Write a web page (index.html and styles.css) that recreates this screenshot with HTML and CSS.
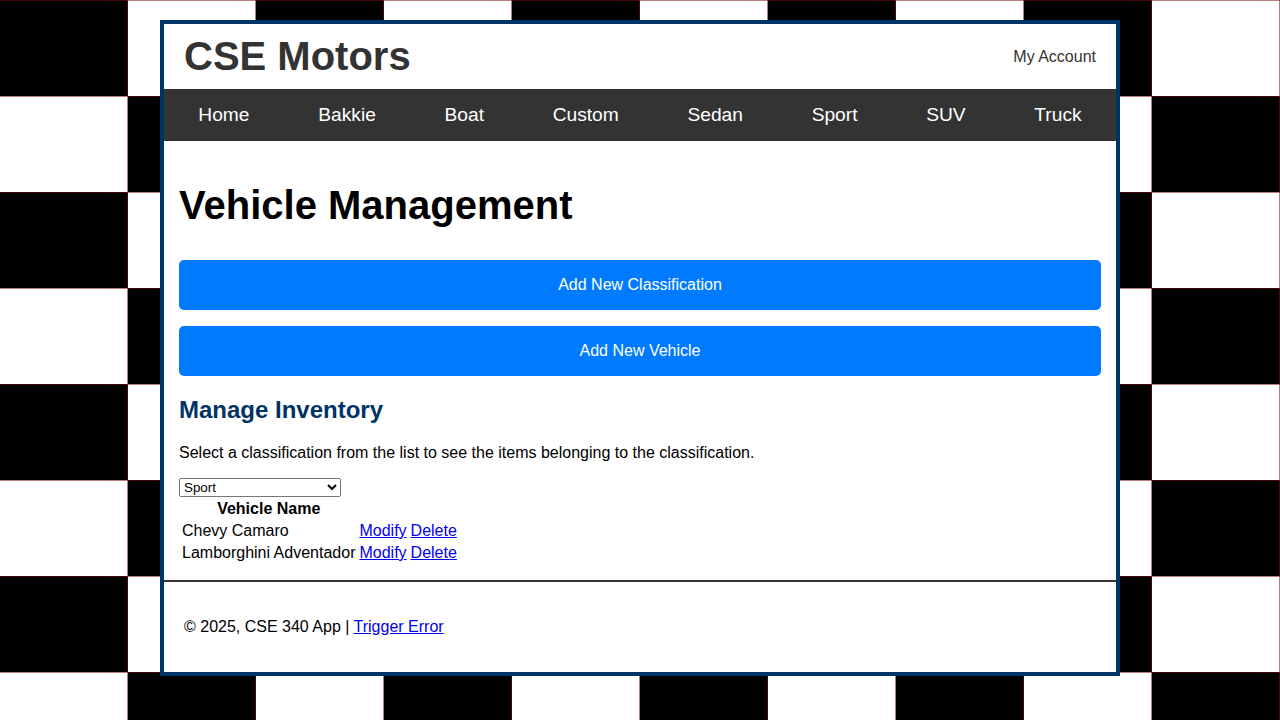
FILE: index.html
```html
<!DOCTYPE html>
<html lang="en">
<head>
<meta charset="utf-8">
<title>Vehicle Management | CSE Motors</title>
<link rel="stylesheet" href="styles.css">
</head>
<body>
<div class="wrapper">
  <header class="site-header">
    <span class="site-name">CSE Motors</span>
    <a class="account" href="#">My Account</a>
  </header>
  <nav class="main-nav">
    <a href="#">Home</a>
    <a href="#">Bakkie</a>
    <a href="#">Boat</a>
    <a href="#">Custom</a>
    <a href="#">Sedan</a>
    <a href="#">Sport</a>
    <a href="#">SUV</a>
    <a href="#">Truck</a>
  </nav>
  <main class="content">
    <h1 class="page-title">Vehicle Management</h1>
    <div class="actions">
      <a class="btn" href="#">Add New Classification</a>
      <a class="btn" href="#">Add New Vehicle</a>
    </div>
    <h2 class="section-title">Manage Inventory</h2>
    <p class="intro">Select a classification from the list to see the items belonging to the classification.</p>
    <select class="class-select">
      <option>Choose a Classification</option>
      <option>Bakkie</option>
      <option>Boat</option>
      <option>Custom</option>
      <option>Sedan</option>
      <option selected>Sport</option>
      <option>SUV</option>
      <option>Truck</option>
    </select>
    <table class="inv-table">
      <thead>
        <tr><th>Vehicle Name</th><td>&nbsp;</td><td>&nbsp;</td></tr>
      </thead>
      <tbody>
        <tr><td>Chevy Camaro</td><td><a href="#">Modify</a></td><td><a href="#">Delete</a></td></tr>
        <tr><td>Lamborghini Adventador</td><td><a href="#">Modify</a></td><td><a href="#">Delete</a></td></tr>
      </tbody>
    </table>
  </main>
  <footer class="site-footer">
    <p>&copy; 2025, CSE 340 App | <a href="#">Trigger Error</a></p>
  </footer>
</div>
</body>
</html>
```
FILE: styles.css
```css
html, body {
  margin: 0;
  padding: 0;
}
body {
  font-family: "Liberation Sans", Arial, sans-serif;
  font-size: 16px;
  color: #000;
  background-color: #fff;
  background-image:
    linear-gradient(90deg, transparent 127px, rgba(120, 20, 20, 0.55) 127px 128px, transparent 128px),
    linear-gradient(180deg, rgba(120, 20, 20, 0.55) 0 1px, transparent 1px),
    conic-gradient(#fff 0 25%, #000 0 50%, #fff 0 75%, #000 0);
  background-size: 128px 96px, 128px 96px, 256px 192px;
  min-height: 720px;
  overflow: hidden;
}
.wrapper {
  width: 952px;
  margin: 20px auto 0;
  border: 4px solid #003366;
  background: #fff;
}
.site-header {
  display: flex;
  justify-content: space-between;
  align-items: center;
  padding: 10px 20px;
}
.site-name {
  font-size: 40px;
  line-height: 45px;
  font-weight: bold;
  color: #333;
}
.account {
  color: #333;
  text-decoration: none;
  font-size: 16px;
}
.main-nav {
  display: flex;
  justify-content: space-around;
  background: #333;
}
.main-nav a {
  color: #fff;
  text-decoration: none;
  font-size: 19.2px;
  line-height: 22px;
  padding: 15px 0;
}
.content {
  padding: 15px 15px 15px;
}
.page-title {
  font-size: 40px;
  line-height: 46px;
  margin: 26px 0 32px;
}
.actions {
  display: flex;
  flex-direction: column;
  gap: 16px;
}
.btn {
  display: block;
  height: 50px;
  line-height: 50px;
  text-align: center;
  background: #007bff;
  color: #fff;
  text-decoration: none;
  border-radius: 5px;
  font-size: 16px;
}
.section-title {
  color: #003366;
  font-size: 24px;
  margin: 20px 0 20px;
}
.intro {
  margin: 0 0 16px;
}
.class-select {
  display: block;
}
.inv-table a {
  color: #0000ee;
}
.site-footer {
  border-top: 2px solid #333;
  padding: 20px;
}
.site-footer p {
  margin: 16px 0 16px;
}
.site-footer a {
  color: #0000ee;
}
```
